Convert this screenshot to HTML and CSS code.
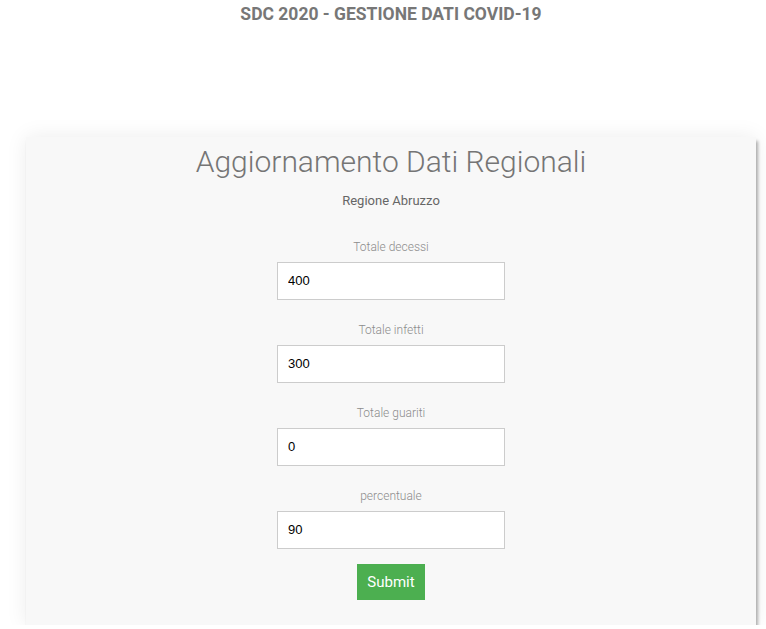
FILE: index.html
```html
<!DOCTYPE html>
<html lang="it">
<head>
<meta charset="utf-8">
<title>SDC 2020 - Gestione dati COVID-19</title>
<link rel="stylesheet" href="styles.css">
</head>
<body>
<div class="page">
  <h1 class="site-title">SDC 2020 - GESTIONE DATI COVID-19</h1>
  <div class="card">
    <h2 class="card-title">Aggiornamento Dati Regionali</h2>
    <p class="region">Regione Abruzzo</p>
    <form class="form">
      <label class="field">
        <span class="field-label">Totale decessi</span>
        <input class="field-input" type="text" value="400">
      </label>
      <label class="field">
        <span class="field-label">Totale infetti</span>
        <input class="field-input" type="text" value="300">
      </label>
      <label class="field">
        <span class="field-label">Totale guariti</span>
        <input class="field-input" type="text" value="0">
      </label>
      <label class="field">
        <span class="field-label">percentuale</span>
        <input class="field-input" type="text" value="90">
      </label>
      <button class="submit" type="button">Submit</button>
    </form>
  </div>
</div>
</body>
</html>
```
FILE: styles.css
```css
html, body {
  margin: 0;
  padding: 0;
  background: #ffffff;
}

body {
  font-family: Roboto, "Liberation Sans", Arial, sans-serif;
  overflow: hidden;
}

.page {
  width: 750px;
  margin-left: 16px;
  display: flex;
  flex-direction: column;
  align-items: center;
}

.site-title {
  margin: 4px 0 0;
  font-size: 17.5px;
  line-height: 20px;
  font-weight: 700;
  color: #777777;
}

.card {
  margin-top: 113px;
  width: 730px;
  height: 488px;
  box-sizing: border-box;
  background: #f8f8f8;
  box-shadow: 2px 4px 3px rgba(0, 0, 0, 0.3), 0 0 20px rgba(0, 0, 0, 0.08);
  padding-top: 7px;
  display: flex;
  flex-direction: column;
  align-items: center;
}

.card-title {
  margin: 0;
  font-size: 30px;
  line-height: 36px;
  font-weight: 300;
  color: #757575;
}

.region {
  margin: 13px 0 0;
  font-size: 13px;
  line-height: 16px;
  color: #666666;
}

.form {
  margin-top: 30px;
  display: flex;
  flex-direction: column;
  align-items: center;
}

.field {
  display: flex;
  flex-direction: column;
  align-items: center;
  margin-bottom: 22px;
}

.field:nth-last-of-type(1) {
  margin-bottom: 15px;
}

.field-label {
  font-size: 12px;
  line-height: 16px;
  font-weight: 300;
  color: #8c8c8c;
  margin-bottom: 7px;
}

.field-input {
  width: 228px;
  height: 38px;
  box-sizing: border-box;
  border: 1px solid #cccccc;
  background: #ffffff;
  padding: 0 10px 1px;
  font-family: "Liberation Sans", Arial, sans-serif;
  font-size: 13px;
  color: #000000;
  outline: none;
  margin: 0;
}

.submit {
  width: 68px;
  height: 36px;
  border: none;
  background: #4caf50;
  color: #ffffff;
  font-family: Roboto, "Liberation Sans", Arial, sans-serif;
  font-size: 15px;
  padding: 0;
  cursor: pointer;
}
```
